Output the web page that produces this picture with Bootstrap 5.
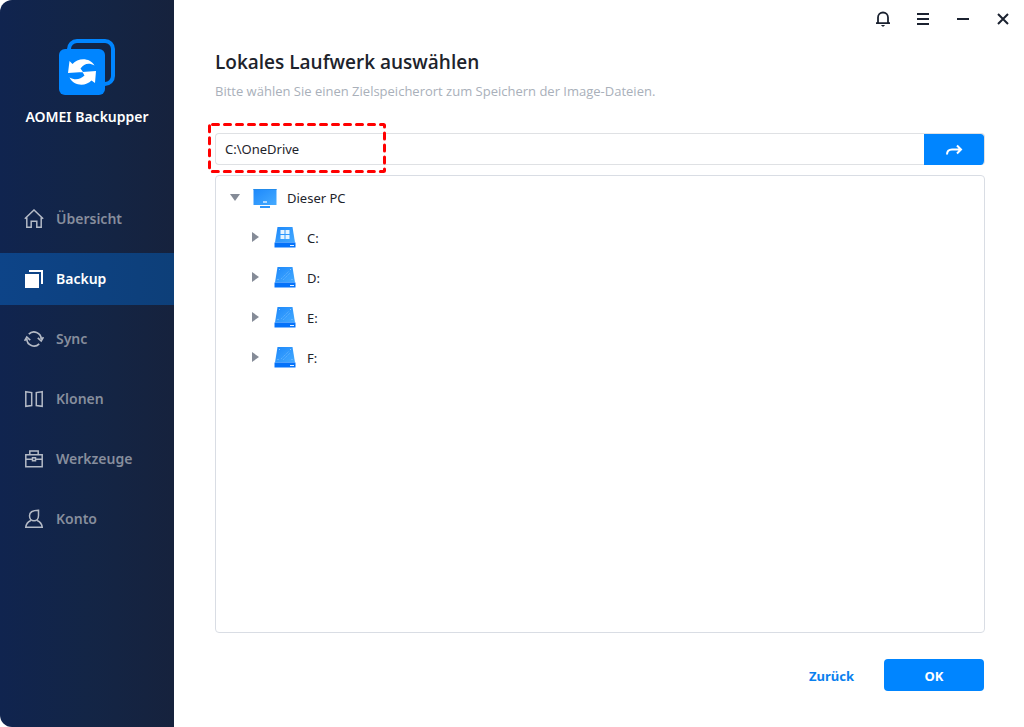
<!DOCTYPE html>
<html lang="de">
<head>
<meta charset="utf-8">
<meta name="viewport" content="width=device-width, initial-scale=1">
<title>AOMEI Backupper</title>
<link href="https://cdn.jsdelivr.net/npm/bootstrap@5.3.0/dist/css/bootstrap.min.css" rel="stylesheet">
<style>
  body { font-family: "Noto Sans", "Open Sans", sans-serif; font-size: 13px; line-height: 20px; color: #1d232b; background: #fff; }
  .app-window { border-radius: 12px; overflow: hidden; background: #fff; }
  .sidebar { width: 174px; background: linear-gradient(90deg, #10244f, #132546 50%, #16223d); }
  .brand { padding-top: 39px; margin-bottom: 66px; font-weight: 600; font-size: 14px; color: #fff; gap: 12px; }
  .side-nav { gap: 8px; }
  .side-nav .nav-link { height: 52px; padding: 0 24px; gap: 12px; color: #878e9d; font-weight: 600; font-size: 14px; }
  .side-nav .nav-link svg { color: #b4bac6; }
  .side-nav .nav-link.active, .side-nav .nav-link.active svg { color: #fff; }
  .side-nav .nav-link.active { background: linear-gradient(90deg, #0d4488, #0d3f79); }
  .win-btn { width: 40px; height: 38px; color: #1b2230; }
  .window-bar { padding-right: 1px; }
  .content { padding: 10px 39px 36px 41px; }
  h1, .hint { font-family: "Open Sans", "Noto Sans", sans-serif; }
  h1 { font-size: 19px; line-height: 28px; font-weight: 600; margin-bottom: 5px; }
  .hint { color: #a9b0ba; margin-bottom: 32px; }
  .path-row { height: 32px; margin-bottom: 10px; }
  .path-row .form-control { border: 1px solid #dfe1e4; border-right: 0; border-radius: 4px 0 0 4px; padding: 2px 9px 0; font-size: 13px; color: #1d232b; }
  .btn-go { width: 61px; border-radius: 0 4px 4px 0; }
  .btn-go, .btn-go:hover { color: #fff; background: #0085ff; border: 0 solid #dfe1e4; border-width: 1px 1px 0 0; background-clip: padding-box; }
  .highlight { left: -7px; top: -10px; pointer-events: none; z-index: 5; }
  .tree { border: 1px solid #d9dde4; border-radius: 4px; padding: 2px 0; }
  .tree ul { padding-left: 20px; }
  .tree-node { height: 40px; padding-left: 12px; }
  .twist, .twist:hover { width: 14px; height: 20px; margin-right: 12px; color: #858b97; }
  .tree-node .drive { margin: 0 10px 0 -1px; }
  .actions { margin-top: 26px; gap: 30px; padding-right: 1px; }
  .actions .btn { height: 32px; font-size: 13px; font-weight: 700; line-height: 20px; }
  .actions .btn span { display: block; padding-top: 2px; }
  .btn-ok, .btn-ok:hover { width: 100px; background: #0085ff; color: #fff; border-radius: 4px; }
  .btn-back, .btn-back:hover { color: #0a80ee; }
  .shape-defs { width: 0; height: 0; }
</style>
</head>
<body>
<svg class="shape-defs position-absolute" aria-hidden="true">
  <defs>
    <linearGradient id="face" x1="0" y1="0" x2="1" y2="1"><stop stop-color="#1c88fb"/><stop offset="1" stop-color="#46abff"/></linearGradient>
  </defs>
  <symbol id="disk" viewBox="0 0 24 24">
    <path d="M4.500 1h15L22 16.500H2z" fill="url(#face)"/>
    <path d="M1.500 16.500h21v5h-21z" fill="#0472fa"/>
    <path d="M17 19.500h4" stroke="#e6f3ff"/>
  </symbol>
  <symbol id="disk-data" viewBox="0 0 24 24">
    <use href="#disk"/>
    <path d="M8 13l8-8M10 14l7-7" stroke="#62b4ff" stroke-width=".8" stroke-dasharray="1.500 .7"/>
    <path d="M6 3.500h1M17 3.500h1M4.500 13.500h1M18.500 13.500h1" stroke="#85c5ff"/>
  </symbol>
  <symbol id="disk-system" viewBox="0 0 24 24">
    <use href="#disk"/>
    <path d="M7.500 4h4v4h-4zM12.500 4h4v4h-4zM7.500 9h4v4h-4zM12.500 9h4v4h-4z" fill="#e6f3ff"/>
  </symbol>
</svg>

<div class="app-window d-flex min-vh-100">
  <aside class="sidebar flex-shrink-0">
    <div class="brand d-flex flex-column align-items-center">
      <svg width="56" height="56" viewBox="0 0 56 56" aria-hidden="true">
        <path d="M10 12V10a8 8 0 0 1 8-8h28a8 8 0 0 1 8 8v27a8 8 0 0 1-8 8h-2" fill="none" stroke="#0085ff" stroke-width="4"/>
        <rect y="10" width="46" height="46" rx="6" fill="#0085ff"/>
        <path d="M10.500 22L13.500 25C19 18.500 31 18.500 35.500 26.500C30 23.500 25 24.500 21.500 29.500L24 33L9 34ZM37 32L36 44L32.500 41.500C27 47.500 15 47.500 10.500 38.500C16 41.500 21.500 40.500 25.500 36.500L23.500 33Z" fill="#fff"/>
      </svg>
      <div>AOMEI Backupper</div>
    </div>
    <nav class="side-nav nav flex-column">
      <a class="nav-link d-flex align-items-center" href="#">
        <svg width="20" height="20" viewBox="0 0 20 20" fill="none" stroke="currentColor" stroke-width="1.500"><path d="M.8 9.800L10 1l9.200 8.800M2.800 8.500v9.700h4.400v-6h5.600v6h4.400V8.500"/></svg>
        <span>Übersicht</span></a>
      <a class="nav-link active d-flex align-items-center" href="#" aria-current="page">
        <svg width="20" height="20" viewBox="0 0 20 20" fill="currentColor"><path d="M1 5h14v14H1zM5 1h14v14h-2V3H5z"/></svg>
        <span>Backup</span></a>
      <a class="nav-link d-flex align-items-center" href="#">
        <svg width="20" height="20" viewBox="0 0 20 20" fill="none" stroke="currentColor" stroke-width="1.700"><path d="M4.800 5.200A7.200 7.200 0 0 1 17.200 10M15.200 14.800A7.200 7.200 0 0 1 2.800 10M.6 11.800L2.800 8l3.400 3.200M19.400 8.200L17.200 12l-3.400-3.200"/></svg>
        <span>Sync</span></a>
      <a class="nav-link d-flex align-items-center" href="#">
        <svg width="20" height="20" viewBox="0 0 20 20" fill="none" stroke="currentColor" stroke-width="1.500"><path d="M1.800 2.700l5.900.9v12.900l-5.900.8zM18.200 2.700l-5.900.9v12.900l5.900.8z"/></svg>
        <span>Klonen</span></a>
      <a class="nav-link d-flex align-items-center" href="#">
        <svg width="20" height="20" viewBox="0 0 20 20" fill="none" stroke="currentColor" stroke-width="1.500"><path d="M1.800 5.800h16.400v12H1.800zM5.800 5.500V2h8.400v3.500M2 10.200h6M12 10.200h6M8.500 8.800h3v3h-3z"/></svg>
        <span>Werkzeuge</span></a>
      <a class="nav-link d-flex align-items-center" href="#">
        <svg width="20" height="20" viewBox="0 0 20 20" fill="none" stroke="currentColor" stroke-width="1.500"><path d="M14.500 1.200v5.300c0 3.400-1.900 5.300-4.500 5.300S5.500 9.700 5.500 6.800c0-3.600 3-5.600 9-5.600zM6.800 11.500C3.800 12.800 2.200 15 1.800 18.200h16.400c-.4-3.200-2-5.400-5-6.700"/></svg>
        <span>Konto</span></a>
    </nav>
  </aside>

  <div class="d-flex flex-column flex-grow-1">
    <header class="window-bar d-flex justify-content-end">
      <button class="btn win-btn border-0 p-0 d-flex align-items-center justify-content-center" type="button" aria-label="Benachrichtigungen"><svg width="16" height="16" viewBox="0 0 16 16" fill="none" stroke="currentColor" stroke-width="1.800"><path d="M3 12V6.500a5 5 0 0 1 10 0V12M1 12.200h14"/><path d="M6 14h4l-1.200 1.400H7.200z" fill="currentColor" stroke="none"/></svg></button>
      <button class="btn win-btn border-0 p-0 d-flex align-items-center justify-content-center" type="button" aria-label="Menü"><svg width="16" height="16" viewBox="0 0 16 16" stroke="currentColor" stroke-width="2"><path d="M2 3h12M2 8h12M2 13h12"/></svg></button>
      <button class="btn win-btn border-0 p-0 d-flex align-items-center justify-content-center" type="button" aria-label="Minimieren"><svg width="16" height="16" viewBox="0 0 16 16" stroke="currentColor" stroke-width="2"><path d="M2 8h12"/></svg></button>
      <button class="btn win-btn border-0 p-0 d-flex align-items-center justify-content-center" type="button" aria-label="Schließen"><svg width="16" height="16" viewBox="0 0 16 16" stroke="currentColor" stroke-width="2"><path d="M3 3l10 10M13 3L3 13"/></svg></button>
    </header>

    <main class="content d-flex flex-column flex-grow-1">
      <h1>Lokales Laufwerk auswählen</h1>
      <p class="hint">Bitte wählen Sie einen Zielspeicherort zum Speichern der Image-Dateien.</p>

      <div class="path-row d-flex position-relative">
        <input class="form-control shadow-none" type="text" value="C:\OneDrive" aria-label="Zielpfad">
        <button class="btn btn-go p-0 flex-shrink-0 d-flex align-items-center justify-content-center" type="button" aria-label="Öffnen"><svg width="18" height="14" viewBox="0 0 18 14" fill="none" stroke="currentColor" stroke-width="2"><path d="M2 11.500C2 8 4 6.500 7 6.500h9M12 2.500l4 4-4 4"/></svg></button>
        <svg class="highlight position-absolute" width="178" height="50" viewBox="0 0 178 50" aria-hidden="true"><rect x="1.500" y="1.500" width="175" height="47" rx="1" fill="none" stroke="#ff0000" stroke-width="3" stroke-dasharray="6 6" stroke-dashoffset="-2" stroke-linecap="round"/></svg>
      </div>

      <section class="tree flex-grow-1" aria-label="Laufwerke">
        <div class="tree-node d-flex align-items-center">
          <button class="btn twist border-0 p-0 d-flex align-items-center justify-content-center" type="button" aria-label="Zuklappen"><svg width="12" height="8" viewBox="0 0 12 8" fill="currentColor"><path d="M1 0h10L6 7z"/></svg></button>
          <svg class="drive" width="24" height="24" viewBox="0 0 24 24" aria-hidden="true"><path d="M.5 3h23v16H.5z" fill="url(#face)"/><path d="M.5 3h23v1H.5z" fill="#238bea"/><path d="M10 16h4" stroke="#d8edff" stroke-width="1.500"/><path d="M7 20h10v2H7z" fill="#2d95fb"/></svg>
          <span>Dieser PC</span>
        </div>
        <ul class="list-unstyled mb-0">
          <li class="tree-node d-flex align-items-center">
            <button class="btn twist border-0 p-0 d-flex align-items-center justify-content-center" type="button" aria-label="Aufklappen"><svg width="8" height="12" viewBox="0 0 8 12" fill="currentColor"><path d="M1 0v10l7-5z"/></svg></button>
            <svg class="drive" width="24" height="24" aria-hidden="true"><use href="#disk-system"/></svg><span>C:</span></li>
          <li class="tree-node d-flex align-items-center">
            <button class="btn twist border-0 p-0 d-flex align-items-center justify-content-center" type="button" aria-label="Aufklappen"><svg width="8" height="12" viewBox="0 0 8 12" fill="currentColor"><path d="M1 0v10l7-5z"/></svg></button>
            <svg class="drive" width="24" height="24" aria-hidden="true"><use href="#disk-data"/></svg><span>D:</span></li>
          <li class="tree-node d-flex align-items-center">
            <button class="btn twist border-0 p-0 d-flex align-items-center justify-content-center" type="button" aria-label="Aufklappen"><svg width="8" height="12" viewBox="0 0 8 12" fill="currentColor"><path d="M1 0v10l7-5z"/></svg></button>
            <svg class="drive" width="24" height="24" aria-hidden="true"><use href="#disk-data"/></svg><span>E:</span></li>
          <li class="tree-node d-flex align-items-center">
            <button class="btn twist border-0 p-0 d-flex align-items-center justify-content-center" type="button" aria-label="Aufklappen"><svg width="8" height="12" viewBox="0 0 8 12" fill="currentColor"><path d="M1 0v10l7-5z"/></svg></button>
            <svg class="drive" width="24" height="24" aria-hidden="true"><use href="#disk-data"/></svg><span>F:</span></li>
        </ul>
      </section>

      <div class="actions d-flex justify-content-end align-items-center">
        <button class="btn btn-back border-0 p-0" type="button"><span>Zurück</span></button>
        <button class="btn btn-ok border-0 p-0" type="button"><span>OK</span></button>
      </div>
    </main>
  </div>
</div>
<script src="https://cdn.jsdelivr.net/npm/bootstrap@5.3.0/dist/js/bootstrap.bundle.min.js"></script>
</body>
</html>
